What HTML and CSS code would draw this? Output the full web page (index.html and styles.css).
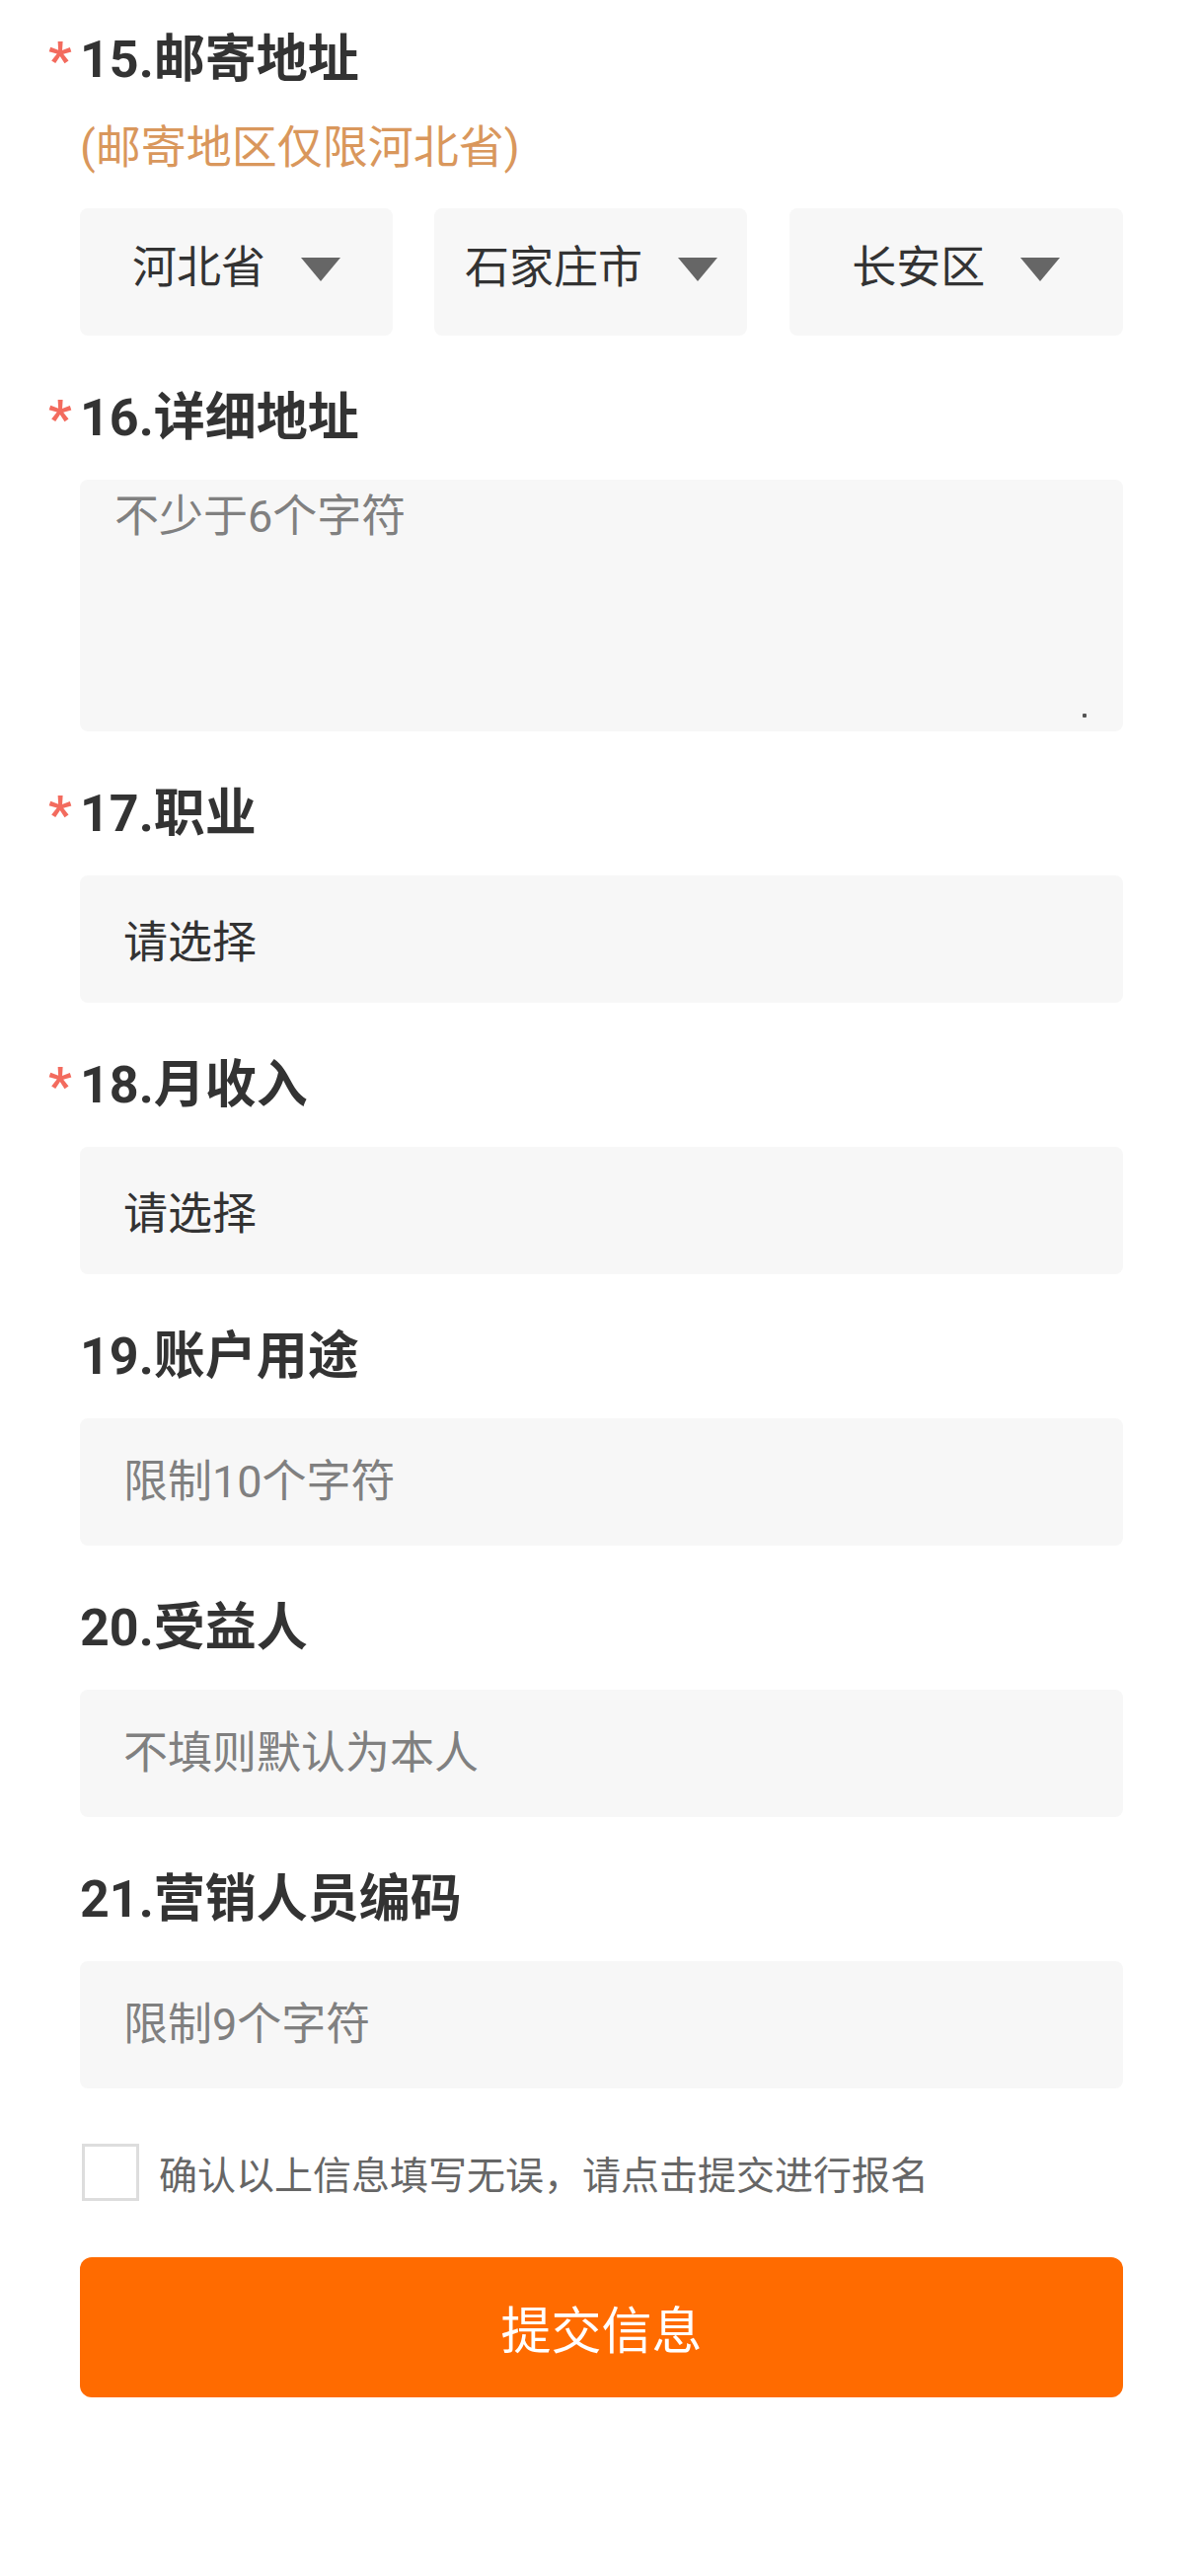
FILE: index.html
```html
<!DOCTYPE html>
<html lang="zh-CN">
<head>
    <meta charset="UTF-8">
    <meta name="viewport" content="width=device-width, initial-scale=1.0">
    <title>信息登记</title>
    <link rel="stylesheet" href="styles.css">
</head>
<body>
    <div class="form">
        <div class="field">
            <div class="field-title required">15.邮寄地址</div>
            <div class="field-tip">(邮寄地区仅限河北省)</div>
            <div class="region">
                <div class="region-item"><span>河北省</span><i class="arrow"></i></div>
                <div class="region-item"><span>石家庄市</span><i class="arrow"></i></div>
                <div class="region-item"><span>长安区</span><i class="arrow"></i></div>
            </div>
        </div>

        <div class="field">
            <div class="field-title required">16.详细地址</div>
            <div class="textarea-wrap">
                <textarea class="textarea" placeholder="不少于6个字符"></textarea>
                <span class="grip"></span>
            </div>
        </div>

        <div class="field">
            <div class="field-title required">17.职业</div>
            <div class="picker">请选择</div>
        </div>

        <div class="field">
            <div class="field-title required">18.月收入</div>
            <div class="picker">请选择</div>
        </div>

        <div class="field">
            <div class="field-title">19.账户用途</div>
            <input class="input" type="text" placeholder="限制10个字符">
        </div>

        <div class="field">
            <div class="field-title">20.受益人</div>
            <input class="input" type="text" placeholder="不填则默认为本人">
        </div>

        <div class="field">
            <div class="field-title">21.营销人员编码</div>
            <input class="input" type="text" placeholder="限制9个字符">
        </div>

        <label class="agree">
            <input class="agree-box" type="checkbox">
            <span>确认以上信息填写无误，请点击提交进行报名</span>
        </label>

        <button class="submit-btn">提交信息</button>
    </div>
</body>
</html>
```

FILE: styles.css
```css
body {
    margin: 0;
    padding: 0;
    background: #fff;
    font-family: Roboto, "Noto Sans CJK SC", sans-serif;
    color: #333;
}
.form {
    width: 1057px;
    padding: 31px 78px 140px 81px;
}
.field {
    margin-top: 54px;
}
.field:first-child {
    margin-top: 0;
}
.field-title {
    position: relative;
    font-size: 52px;
    font-weight: bold;
    line-height: 60px;
    color: #333;
    margin-bottom: 32px;
}
.field-title.required::before {
    content: "*";
    position: absolute;
    left: -32px;
    top: 1px;
    color: #f36b5e;
}
.field-tip {
    margin-top: -4px;
    margin-bottom: 32px;
    font-size: 46px;
    line-height: 60px;
    color: #d9975c;
}
.region {
    display: grid;
    grid-template-columns: 30% 30% 1fr;
    column-gap: 4%;
}
.region-item {
    box-sizing: border-box;
    height: 129px;
    padding-bottom: 16px;
    background: #f7f7f7;
    border-radius: 8px;
    display: flex;
    align-items: center;
    justify-content: center;
    gap: 36px;
    font-size: 45px;
    color: #333;
}
.arrow {
    width: 0;
    height: 0;
    border-left: 20px solid transparent;
    border-right: 20px solid transparent;
    border-top: 24px solid #666;
    margin-top: 10px;
}
.textarea-wrap {
    position: relative;
}
.textarea {
    display: block;
    box-sizing: border-box;
    width: 100%;
    height: 255px;
    padding: 8px 35px;
    border: none;
    border-radius: 8px;
    background: #f7f7f7;
    font-family: inherit;
    font-size: 45px;
    line-height: 60px;
    color: #333;
    resize: none;
    outline: none;
}
.textarea::placeholder,
.input::placeholder {
    color: #808080;
}
.grip {
    position: absolute;
    right: 37px;
    bottom: 14px;
    width: 4px;
    height: 4px;
    background: #555;
    border-radius: 1px;
}
.picker,
.input {
    display: flex;
    align-items: center;
    box-sizing: border-box;
    width: 100%;
    height: 129px;
    padding: 0 44px;
    border: none;
    border-radius: 8px;
    background: #f7f7f7;
    font-family: inherit;
    font-size: 45px;
    color: #333;
    outline: none;
}
.agree {
    display: flex;
    align-items: center;
    gap: 20px;
    margin-top: 55px;
    height: 60px;
    font-size: 39px;
    color: #666;
}
.agree-box {
    appearance: none;
    margin: 0 0 0 2px;
    width: 58px;
    height: 58px;
    border: 3px solid #ddd;
    background: #fff;
    box-sizing: border-box;
}
.submit-btn {
    display: block;
    width: 100%;
    height: 142px;
    margin-top: 56px;
    border: none;
    border-radius: 12px;
    background: #ff6b00;
    color: #fff;
    font-family: inherit;
    font-size: 51px;
    cursor: pointer;
}
```
